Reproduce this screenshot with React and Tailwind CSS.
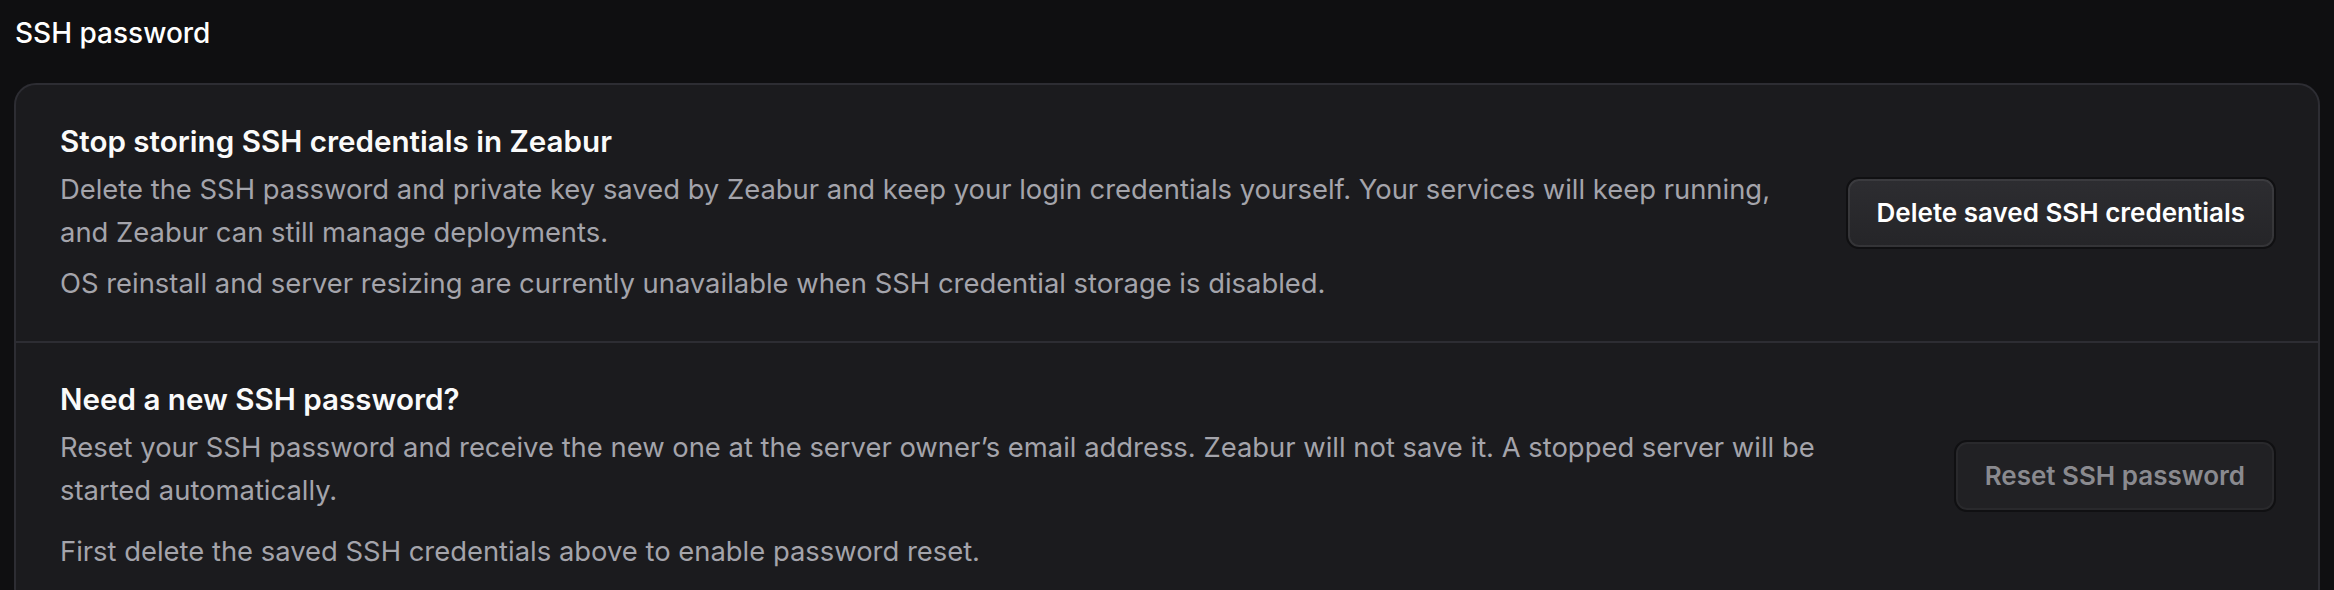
import React from 'react';

const sections = [
  {
    title: 'Stop storing SSH credentials in Zeabur',
    lines: [
      'Delete the SSH password and private key saved by Zeabur and keep your login credentials yourself. Your services will keep running,',
      'and Zeabur can still manage deployments.',
    ],
    note: 'OS reinstall and server resizing are currently unavailable when SSH credential storage is disabled.',
    noteGap: 'mt-[8px]',
    action: 'Delete saved SSH credentials',
    disabled: false,
  },
  {
    title: 'Need a new SSH password?',
    lines: [
      'Reset your SSH password and receive the new one at the server owner\u2019s email address. Zeabur will not save it. A stopped server will be',
      'started automatically.',
    ],
    note: 'First delete the saved SSH credentials above to enable password reset.',
    noteGap: 'mt-[18px]',
    action: 'Reset SSH password',
    disabled: true,
  },
];

function ActionButton({ label, disabled }) {
  const base =
    'shrink-0 h-[72px] px-[29px] rounded-[13px] border-2 border-[#101012] text-[26px] font-semibold whitespace-nowrap';
  const look = disabled
    ? 'bg-[#212124] text-[#8a8a8f] shadow-[inset_0_0_0_2px_rgba(255,255,255,0.04)] cursor-not-allowed'
    : 'bg-gradient-to-b from-[#2d2d31] to-[#252528] text-white shadow-[inset_0_0_0_2px_rgba(255,255,255,0.07)]';
  return (
    <button type="button" disabled={disabled} className={`${base} ${look}`}>
      {label}
    </button>
  );
}

function Section({ item, last }) {
  return (
    <div
      className={`flex items-center justify-between gap-[30px] pl-[44px] pr-[42px] pt-[35px] pb-[36px] ${
        last ? '' : 'border-b-2 border-[#2d2d33]'
      }`}
    >
      <div className="min-w-0 flex-1">
        <h3 className="text-[29.6px] leading-[43px] font-semibold text-[#fafafa]">{item.title}</h3>
        <p className="mt-[5px] text-[27.4px] leading-[43px] text-[#a4a4ab] whitespace-nowrap">
          {item.lines[0]}
          <br />
          {item.lines[1]}
        </p>
        <p className={`${item.noteGap} text-[27.4px] leading-[43px] text-[#a4a4ab]`}>{item.note}</p>
      </div>
      <ActionButton label={item.action} disabled={item.disabled} />
    </div>
  );
}

export default function App() {
  return (
    <div className="min-h-screen bg-[#0f0f11] px-[14px] pt-[12px] font-['Inter','Noto_Sans',sans-serif] antialiased">
      <h2 className="pl-[1px] text-[28px] leading-[43px] font-medium text-white">SSH password</h2>
      <div className="mt-[28px] overflow-hidden rounded-[22px] border-2 border-[#2d2d33] bg-[#1b1b1e]">
        {sections.map((item, i) => (
          <Section key={item.title} item={item} last={i === sections.length - 1} />
        ))}
      </div>
    </div>
  );
}
